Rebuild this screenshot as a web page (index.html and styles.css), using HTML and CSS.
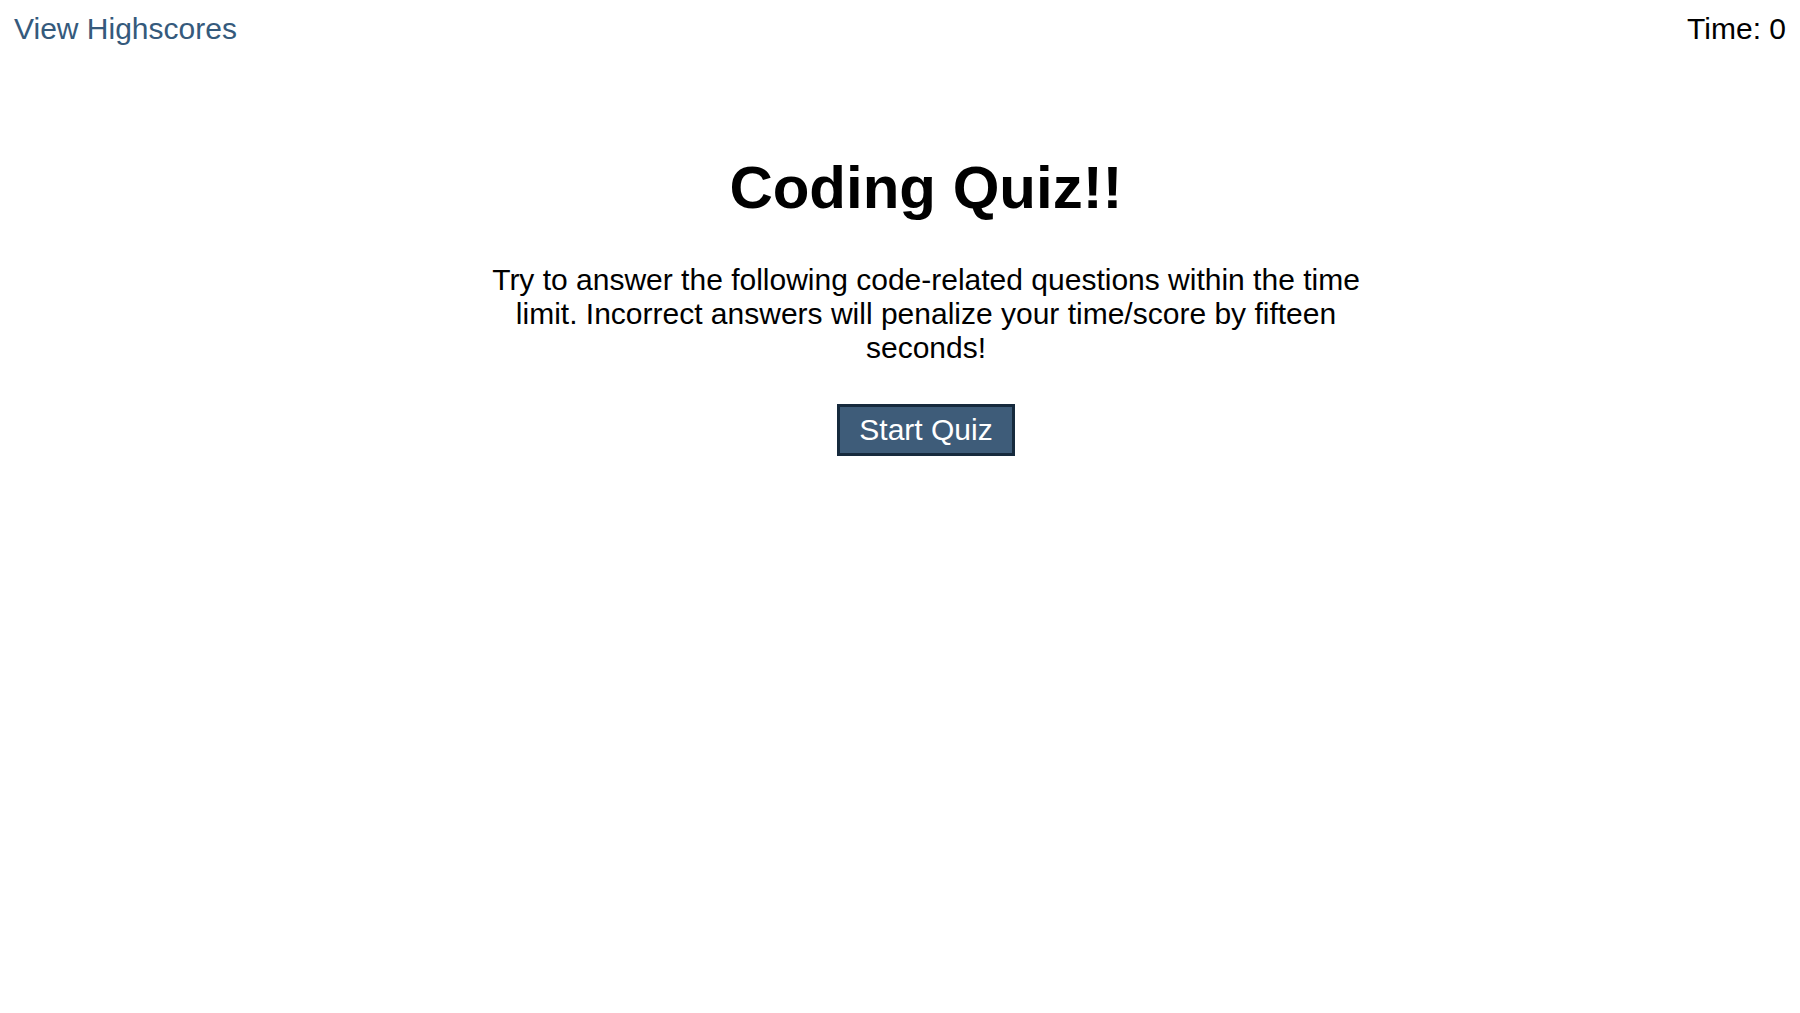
FILE: index.html
```html
<!DOCTYPE html>
<html lang="en">
<head>
<meta charset="utf-8">
<title>Coding Quiz</title>
<link rel="stylesheet" href="styles.css">
</head>
<body>
<header class="topbar">
  <a class="highscores" href="#">View Highscores</a>
  <div class="timer">Time: 0</div>
</header>
<main class="intro">
  <h1 class="title">Coding Quiz!!</h1>
  <p class="desc">Try to answer the following code-related questions within the time limit. Incorrect answers will penalize your time/score by fifteen seconds!</p>
  <button class="start">Start Quiz</button>
</main>
</body>
</html>
```
FILE: styles.css
```css
html, body {
  margin: 0;
  padding: 0;
  background: #ffffff;
}
body {
  font-family: "Liberation Sans", Arial, sans-serif;
  font-size: 30px;
  color: #000000;
}
.topbar {
  display: flex;
  justify-content: space-between;
  align-items: flex-start;
  padding: 12px 14px 0 14px;
}
.highscores {
  color: #355a7c;
  text-decoration: none;
}
.timer {
  color: #000000;
}
.intro {
  display: flex;
  flex-direction: column;
  align-items: center;
  margin-top: 107px;
  padding-left: 52px;
}
.title {
  margin: 0;
  font-size: 60px;
  font-weight: bold;
}
.desc {
  width: 900px;
  margin: 41px 0 0 0;
  text-align: center;
}
.start {
  margin-top: 39px;
  font-family: "Liberation Sans", Arial, sans-serif;
  font-size: 30px;
  color: #ffffff;
  background: #3e5c79;
  border: 3px solid #162a3d;
  padding: 6px 19px;
  border-radius: 0;
}
```
